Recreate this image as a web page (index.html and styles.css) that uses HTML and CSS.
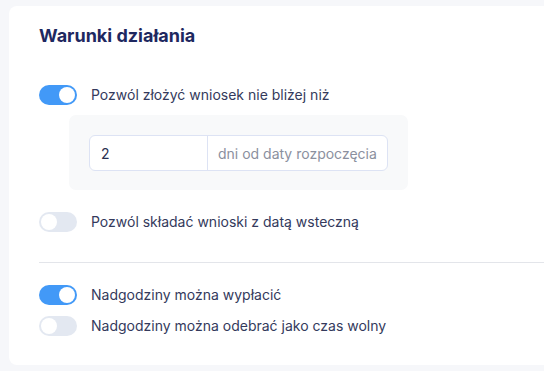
FILE: index.html
```html
<!DOCTYPE html>
<html lang="pl">
<head>
<meta charset="utf-8">
<link rel="stylesheet" href="styles.css">
</head>
<body>
<div class="card">
  <h2 class="title">Warunki działania</h2>
  <div class="row row-first">
    <span class="toggle on"><span class="knob"></span></span>
    <span class="label">Pozwól złożyć wniosek nie bliżej niż</span>
  </div>
  <div class="subbox">
    <div class="inputgroup">
      <div class="field">2</div>
      <div class="suffix">dni od daty rozpoczęcia</div>
    </div>
  </div>
  <div class="row row-second">
    <span class="toggle"><span class="knob"></span></span>
    <span class="label">Pozwól składać wnioski z datą wsteczną</span>
  </div>
  <div class="divider"></div>
  <div class="row row-third">
    <span class="toggle on"><span class="knob"></span></span>
    <span class="label">Nadgodziny można wypłacić</span>
  </div>
  <div class="row row-fourth">
    <span class="toggle"><span class="knob"></span></span>
    <span class="label">Nadgodziny można odebrać jako czas wolny</span>
  </div>
</div>
</body>
</html>
```
FILE: styles.css
```css
html, body {
  margin: 0;
  padding: 0;
}
body {
  background: #f6f7fa;
  font-family: Inter, "Noto Sans", sans-serif;
  overflow: hidden;
  width: 544px;
  height: 371px;
}
.card {
  margin: 6px 0 0 9px;
  width: 560px;
  background: #ffffff;
  border-radius: 8px;
  padding: 18px 0 29px 30px;
  box-sizing: border-box;
}
.title {
  margin: 0;
  font-size: 18px;
  line-height: 24px;
  font-weight: 700;
  color: #1e2860;
}
.row {
  display: flex;
  align-items: center;
  gap: 14px;
  height: 20px;
}
.row-first { margin-top: 37px; }
.row-second { margin-top: 22px; }
.row-third { margin-top: 22px; }
.row-fourth { margin-top: 11px; }
.toggle {
  width: 38px;
  height: 20px;
  border-radius: 10px;
  background: #e3e8f1;
  display: flex;
  align-items: center;
  padding: 2px;
  box-sizing: border-box;
  flex: none;
}
.toggle .knob {
  width: 16px;
  height: 16px;
  border-radius: 50%;
  background: #ffffff;
}
.toggle.on {
  background: #4299f7;
  justify-content: flex-end;
}
.label {
  font-size: 14px;
  color: #343a5c;
  line-height: 20px;
}
.subbox {
  margin: 10px 0 0 30px;
  width: 339px;
  background: #f8f9fa;
  border-radius: 7px;
  padding: 20px 20px 19px 20px;
  box-sizing: border-box;
}
.inputgroup {
  display: flex;
  height: 36px;
  border: 1px solid #dde3f4;
  border-radius: 6px;
  background: #ffffff;
  box-sizing: border-box;
  font-size: 14px;
}
.field {
  width: 118px;
  padding-left: 11px;
  box-sizing: border-box;
  border-right: 1px solid #dde3f4;
  display: flex;
  align-items: center;
  color: #2a3050;
}
.suffix {
  padding-left: 10px;
  display: flex;
  align-items: center;
  color: #8b909e;
}
.divider {
  margin-top: 30px;
  height: 1px;
  background: #e3e5ea;
}
```
